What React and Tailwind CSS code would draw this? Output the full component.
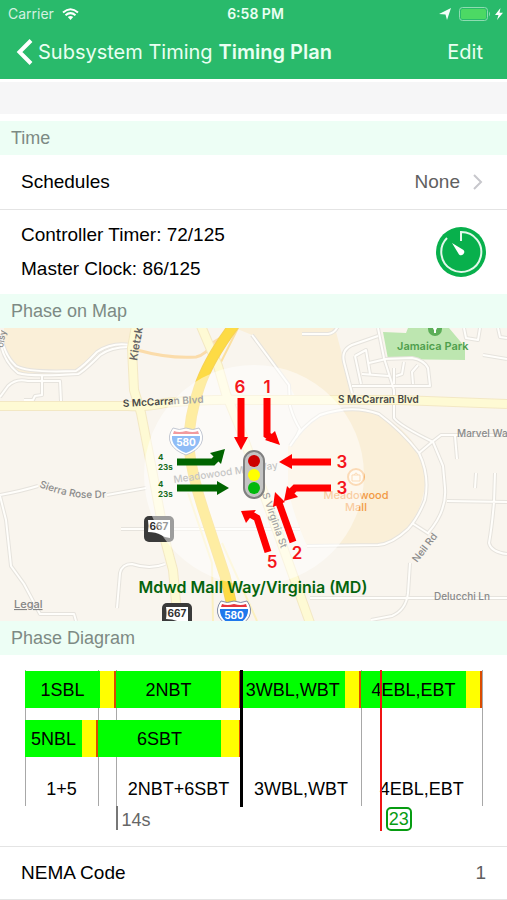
const CYCLE = 125;
const LOCAL_TIMER = 97;

const RING_ONE = [
  { label: "1SBL", green: 21, yellow: 4 },
  { label: "2NBT", green: 29, yellow: 5 },
  { label: "3WBL,WBT", green: 29, yellow: 4 },
  { label: "4EBL,EBT", green: 29, yellow: 4 },
];

const RING_TWO = [
  { label: "5NBL", green: 16, yellow: 4 },
  { label: "6SBT", green: 34, yellow: 5 },
];

const STAGES = [
  { label: "1+5", length: 20 },
  { label: "", length: 5 },
  { label: "2NBT+6SBT", length: 34 },
  { label: "3WBL,WBT", length: 33 },
  { label: "4EBL,EBT", length: 33 },
];

const GRID_LINES = [0, 20, 25, 92, 125];

// thin local streets, drawn twice: grey casing, then white fill
const STREETS = [
  "M0 10 Q2 32 18 45 Q30 49 78 46 Q84 43 100 27 Q112 18 133 19",
  "M0 2 Q3 26 16 38 Q28 45 76 43 Q84 38 97 24 Q112 14 130 17",
  "M0 69 L8 58 Q16 50 28 53 L60 53 L61 73",
  "M42 47 L42 67 L35 68 L33 72 L24 72",
  "M0 167 Q22 163 38 158",
  "M107 167 L146 160",
  "M0 168 L6 192 L11 238 L24 256 L40 286 L74 286 L76 293",
  "M121 201 L152 201 M170 201 L300 201",
  "M117 280 L120 245 Q122 236 132 236 Q150 242 165 236",
  "M252 7 L289 57 L290 78 Q294 92 300 101 L296 110",
  "M290 118 Q302 98 320 87 Q352 76 379 86 Q402 103 419 125 Q430 148 425 172 Q418 190 408 201 Q392 216 378 217 L307 218",
  "M302 6 L328 6 Q335 5 338 -2",
  "M352 65 L344 34 Q341 22 352 17 L378 8",
  "M378 0 L384 30 L394 62 L394 90 Q400 98 433 114 L443 138 L445 160 Q447 183 428 205",
  "M352 58 L430 58 L428 40 Q424 32 412 30 L384 31",
  "M355 28 L366 22 L370 46 M355 28 L361 56 M369 35 L386 31 M362 46 L389 48",
  "M396 48 L402 46 L404 34 M413 56 L412 44 L418 37 M394 56 L394 40",
  "M419 125 L432 114 L441 107 L507 107",
  "M455 108 L457 131 M476 145 L475 160",
  "M412 195 L429 206 M410 235 L408 265 Q406 282 392 288 L371 292",
  "M447 173 L507 174 M495 145 L494 174 Q492 198 489 215 Q491 224 507 226",
  "M310 270 L507 270",
  "M464 0 L466 10 L478 12 L480 0 M483 27 L507 31 M498 0 L500 9 L507 10",
];

// arterials in pale yellow
const ARTERIALS = [
  "M0 78 H128 Q148 79 165 75 Q205 71 250 72 H400 L507 76",
  "M136 -2 L132 20 L134 62 L141 85 L153 147 L165 212 L173 242 L178 295",
  "M201 -2 L218 38 L226 66 L238 95 L260 155 L284 222 L310 295",
];

const FREEWAY = "M235 -4 Q208 32 199 60 Q188 92 189 120 Q192 148 204 184 L225 248 L236 295";

const ARROWS = [
  { color: "#ff0000", path: "M241 70 V110", head: "234,109 248,109 241,122" },
  { color: "#ff0000", path: "M267 70 V107 L273 111", head: "275,103 280,117 265,112" },
  { color: "#ff0000", path: "M331 134 H290", head: "292,126 292,141 279,134" },
  { color: "#ff0000", path: "M331 160 H295 L290 165", head: "287,158 298,169 284,173" },
  { color: "#006400", path: "M177 134 H213 L218 129", head: "210,125 225,121 221,136" },
  { color: "#006400", path: "M177 160 H218", head: "217,153 217,167 229,160" },
  { color: "#ff0000", path: "M268 224 L257 190 L250 186", head: "256,182 241,183 246,195" },
  { color: "#ff0000", path: "M293 214 L279 175", head: "273,179 285,174 275,164" },
];

const PHASE_NUMBERS = [
  { text: "6", x: 240, y: 65 },
  { text: "1", x: 267, y: 65 },
  { text: "3", x: 342, y: 140 },
  { text: "3", x: 342, y: 166 },
  { text: "2", x: 297, y: 231 },
  { text: "5", x: 272, y: 240 },
];

function StatusBar() {
  return (
    <div className="grid grid-cols-3 items-center px-2 pt-1 text-[14px] leading-5">
      <div className="flex items-center gap-2 text-[#d4f1e0]">
        <span>Carrier</span>
        <svg className="h-3 w-[17px]" viewBox="0 0 17 12" fill="none" stroke="white" strokeWidth="2">
          <path d="M1 4.5 Q8.500 -2 16 4.500" />
          <path d="M3.500 7.200 Q8.500 3 13.500 7.200" />
          <path d="M5.800 9 Q8.500 6.800 11.200 9 L8.500 12 Z" fill="white" stroke="none" />
        </svg>
      </div>
      <div className="pl-1 text-center font-semibold text-[#eafff3]">6:58 PM</div>
      <div className="-mr-1 flex items-center justify-end gap-1">
        <svg className="mr-1 h-3 w-3" viewBox="0 0 12 12" fill="#f2fff8">
          <path d="M12 0 L8 12 L6.500 6.500 L0 6 Z" />
        </svg>
        <svg className="h-[14px] w-8" viewBox="0 0 32 14">
          <rect x="0.500" y="0.500" width="28" height="13" rx="3" fill="none" stroke="#8edcb1" />
          <rect x="2" y="2" width="25" height="10" rx="1.500" fill="#4cd964" />
          <path d="M30 4.500 Q32 7 30 9.500 Z" fill="#8edcb1" />
        </svg>
        <svg className="h-3 w-2" viewBox="0 0 8 12" fill="white">
          <path d="M5.500 0 L0 7 H3.500 L2 12 L8 4.800 H4.500 Z" />
        </svg>
      </div>
    </div>
  );
}

function NavBar() {
  return (
    <header className="bg-[#29ba6b] pb-2 font-['Inter',sans-serif]">
      <StatusBar />
      <nav className="flex items-center pt-[9px] pr-6 pl-4 text-[20px] text-[#e9fff2]">
        <button type="button" className="flex items-center gap-1 whitespace-nowrap">
          <svg className="h-7 w-[18px]" viewBox="0 0 18 28" fill="none" stroke="white" strokeWidth="4">
            <path d="M15 2.500 L3.500 14 L15 25.500" />
          </svg>
          <span className="leading-[38px]">Subsystem Timing</span>
        </button>
        <h1 className="ml-[6px] font-semibold whitespace-nowrap">Timing Plan</h1>
        <button type="button" className="ml-auto">Edit</button>
      </nav>
    </header>
  );
}

function SectionHeader({ title }) {
  return <h2 className="bg-[#edfef5] px-[11px] py-1 text-[18px] leading-[26px] text-[#7d8a84]">{title}</h2>;
}

function TimerIcon() {
  return (
    <svg className="h-[50px] w-[50px]" viewBox="0 0 50 50">
      <circle cx="25" cy="25" r="25" fill="#08b04c" />
      <path d="M25 14 V5 A20 20 0 1 1 11 11" fill="none" stroke="#e3f8eb" strokeWidth="2" />
      <path d="M16 16 L27.500 23 A3.200 3.200 0 0 1 23 27.500 Z" fill="white" />
    </svg>
  );
}

function InterstateShield({ x, y }) {
  return (
    <g transform={`translate(${x} ${y})`}>
      <path d="M4 0 Q10 3 17 0 Q24 3 30 0 Q36 8 32 16 Q28 23 17 27 Q6 23 2 16 Q-2 8 4 0 Z" fill="white" stroke="#8790a6" strokeWidth="1" />
      <path d="M5 3 Q10 5 17 3 Q24 5 29 3 L30 6 H4 Z" fill="#e5343c" />
      <path d="M3 8 H31 Q32 19 17 25 Q2 19 3 8 Z" fill="#1f78ec" />
      <text x="17" y="18" textAnchor="middle" fontSize="10" fontWeight="700" fill="white">580</text>
    </g>
  );
}

function StateShield({ x, y }) {
  return (
    <g transform={`translate(${x} ${y})`}>
      <rect x="0" y="0" width="30" height="26" rx="5" fill="#3a3a3a" />
      <path d="M4 4 H26 V22 Q21 22 17 19 Q12 16 4 16 Q5 10 4 4 Z" fill="white" />
      <text x="15" y="14" textAnchor="middle" fontSize="10" fontWeight="700" fill="#333">667</text>
    </g>
  );
}

function PhaseMap() {
  return (
    <svg className="block w-full bg-[#f9f5ee] font-['Inter',sans-serif]" viewBox="0 0 507 293" role="img" aria-label="Phase on Map">
      <g fill="#faefd8">
        <path d="M4 0 H136 L132 18 Q110 14 96 26 L80 44 L24 47 Q8 38 4 20 Z" />
        <path d="M235 0 H335 L344 34 L352 68 L296 70 L289 57 L252 7 Z" />
        <path d="M288 119 Q306 88 352 79 Q400 88 419 124 Q435 150 412 197 Q398 214 380 217 L307 218 Q294 190 288 160 Z" />
      </g>
      <path d="M383 4 L406 5 L408 0 H449 L465 19 V32 L388 31 Z" fill="#bde6b0" />

      <g fill="none" strokeLinejoin="round">
        {STREETS.map((d) => (
          <path key={d} d={d} stroke="#e6e3dd" strokeWidth="4" />
        ))}
        {STREETS.map((d) => (
          <path key={d} d={d} stroke="#fffefb" strokeWidth="2" />
        ))}
        <path d="M137 22 Q170 31 196 29 Q206 27 214 14 L234 2" stroke="#fbdcaa" strokeWidth="3" />
        <path d="M238 0 L220 36" stroke="#fbdfa0" strokeWidth="2" />
        <path d="M188 165 L212 235 L213 293 M222 215 L257 293" stroke="#fbf0c0" strokeWidth="2" />
        {ARTERIALS.map((d) => (
          <path key={d} d={d} stroke="#f3e8c4" strokeWidth="10" />
        ))}
        {ARTERIALS.map((d) => (
          <path key={d} d={d} stroke="#fefad4" strokeWidth="8" />
        ))}
        <path d={FREEWAY} stroke="#f6d257" strokeWidth="11" />
        <path d={FREEWAY} stroke="#fddb45" strokeWidth="9" />
      </g>

      <circle cx="435" cy="1" r="7" fill="#5cae58" />
      <path d="M435 -3 a3 3 0 0 1 1 5 V5 H434 V2 a3 3 0 0 1 1 -5" fill="white" />
      <InterstateShield x={169} y={100} />
      <InterstateShield x={217} y={273} />
      <StateShield x={144} y={188} />
      <StateShield x={162} y={275} />

      <g fontSize="11" fontWeight="500" fill="#8a8a8a">
        <g fill="#484848" fontWeight="600">
          <text x="123" y="79" fontSize="10" transform="rotate(-3 123 79)">S McCarran Blvd</text>
          <text x="338" y="75" fontSize="10">S McCarran Blvd</text>
          <text x="137" y="33" fontSize="11" transform="rotate(-80 137 33)" fill="#666">Kietzke Ln</text>
        </g>
        <text x="397" y="22" fontSize="11" fontWeight="600" fill="#4f9f4d">Jamaica Park</text>
        <text x="457" y="109" fontSize="10">Marvel Way</text>
        <text x="417" y="235" fontSize="10" transform="rotate(-52 417 235)">Neil Rd</text>
        <text x="434" y="272" fontSize="10">Delucchi Ln</text>
        <text x="3" y="20" fontSize="9" transform="rotate(-80 3 20)">olsy</text>
        <path id="sierra-rose" d="M39 159 Q54 165 70 168 Q86 172 120 168" fill="none" />
        <text fontSize="10">
          <textPath href="#sierra-rose">Sierra Rose Dr</textPath>
        </text>
        <text x="174" y="155" fontSize="10" transform="rotate(-8 174 155)">Meadowood Mall Way</text>
        <g fill="#f29a44" textAnchor="middle">
          <text x="356" y="171">Meadowood</text>
          <text x="356" y="183">Mall</text>
        </g>
      </g>
      <circle cx="356" cy="149" r="8" fill="#fff6e6" stroke="#f7b56d" strokeWidth="2" />
      <path d="M352 147 H360 V153 H352 Z M354 147 Q356 143 358 147" fill="none" stroke="#f7b56d" />

      <circle cx="254" cy="147" r="110" fill="white" fillOpacity="0.5" />

      <text x="262" y="166" fontSize="10" fontWeight="500" fill="#a3a3a3" transform="rotate(71 262 166)">S Virginia St</text>

      <a href="#legal">
        <text x="14" y="280" fontSize="11" fontWeight="500" fill="#858585" textDecoration="underline">Legal</text>
      </a>

      {ARROWS.map((arrow) => (
        <g key={arrow.head}>
          <path d={arrow.path} fill="none" stroke={arrow.color} strokeWidth="7" />
          <polygon points={arrow.head} fill={arrow.color} />
        </g>
      ))}
      <g fontSize="17" fontWeight="600" fill="#f5141a" textAnchor="middle">
        {PHASE_NUMBERS.map((n) => (
          <text key={`${n.text}-${n.y}`} x={n.x} y={n.y}>{n.text}</text>
        ))}
      </g>
      <g fontSize="8" fontWeight="700" fill="#156b1c">
        <text x="158" y="132">4</text>
        <text x="158" y="142">23s</text>
        <text x="158" y="159">4</text>
        <text x="158" y="169">23s</text>
      </g>

      <rect x="244" y="123" width="20" height="47" rx="10" fill="#c4c4c4" stroke="#808080" strokeWidth="2" />
      <circle cx="254" cy="133" r="6" fill="#cc0000" />
      <circle cx="254" cy="147" r="6" fill="#ffff00" />
      <circle cx="254" cy="160" r="6" fill="#00b80c" />

      <text x="253" y="265" textAnchor="middle" fontSize="16" fontWeight="600" fill="#05640d">
        Mdwd Mall Way/Virginia (MD)
      </text>
    </svg>
  );
}

function Ring({ phases }) {
  const total = phases.reduce((sum, p) => sum + p.green + p.yellow, 0);

  return (
    <div className="flex h-[37px]" style={{ width: `${(total / CYCLE) * 100}%` }}>
      {phases.map((p) => (
        <div key={p.label} className="flex min-w-0" style={{ flex: `${p.green + p.yellow} 0 0` }}>
          <div className="flex min-w-0 items-center justify-center bg-[#00ff00]" style={{ flex: `${p.green} 0 0` }}>
            {p.label}
          </div>
          <div className="border-r-2 border-[#dc4b00] bg-[#ffff00]" style={{ flex: `${p.yellow} 0 0` }} />
        </div>
      ))}
    </div>
  );
}

function PhaseDiagram() {
  const at = (seconds) => ({ left: `${(seconds / CYCLE) * 100}%` });

  return (
    <div className="px-[25px] py-[15px]">
      <div className="relative h-[161px] text-[18px] leading-[22px] text-black">
        {GRID_LINES.map((s) => (
          <div key={s} className="absolute top-0 h-[136px] w-px bg-[#a8a8a8]" style={at(s)} />
        ))}
        <div className="relative flex flex-col gap-3 pt-px">
          <Ring phases={RING_ONE} />
          <Ring phases={RING_TWO} />
        </div>
        <div className="relative flex pt-[21px]">
          {STAGES.map((stage, i) => (
            <div key={i} className="flex min-w-0 justify-center whitespace-nowrap" style={{ flex: `${stage.length} 0 0` }}>
              {stage.label}
            </div>
          ))}
        </div>
        <div className="absolute top-0 -ml-px h-[137px] w-[3px] bg-black" style={at(59)} />
        <div className="absolute top-[136px] flex h-6 items-center border-l-2 border-[#777] pl-[3px] pt-1 text-[#666]" style={at(25)}>
          14s
        </div>
        <div className="absolute top-0 flex h-[161px] items-end border-l-2 border-[#f01414] pl-1" style={at(LOCAL_TIMER)}>
          <span className="rounded-[5px] border-2 border-[#079c12] px-px leading-5 text-[#079c12]">23</span>
        </div>
      </div>
    </div>
  );
}

export default function App() {
  return (
    <main className="bg-white font-['Liberation_Sans',Arial,sans-serif] text-black">
      <NavBar />
      <div className="mt-[3px] mb-[7px] h-8 bg-[#f6f6f7]" />

      <SectionHeader title="Time" />
      <button type="button" className="flex w-full items-center border-b border-[#e4e4e4] px-[21px] py-[13px] text-[19px] leading-7">
        <span>Schedules</span>
        <span className="ml-auto text-[#606060]">None</span>
        <svg className="ml-3 h-4 w-[14px]" viewBox="0 0 14 16" fill="none" stroke="#c7c7cc" strokeWidth="2">
          <path d="M2 1 L9 8 L2 15" />
        </svg>
      </button>
      <div className="flex items-center justify-between px-[21px] py-2 text-[19px]">
        <div className="leading-[34px]">
          <p>Controller Timer: 72/125</p>
          <p>Master Clock: 86/125</p>
        </div>
        <TimerIcon />
      </div>

      <SectionHeader title="Phase on Map" />
      <PhaseMap />

      <SectionHeader title="Phase Diagram" />
      <PhaseDiagram />

      <div className="flex items-center justify-between border-y border-[#e4e4e4] px-[21px] py-3 text-[19px] leading-7">
        <span>NEMA Code</span>
        <span className="text-[#606060]">1</span>
      </div>
    </main>
  );
}
